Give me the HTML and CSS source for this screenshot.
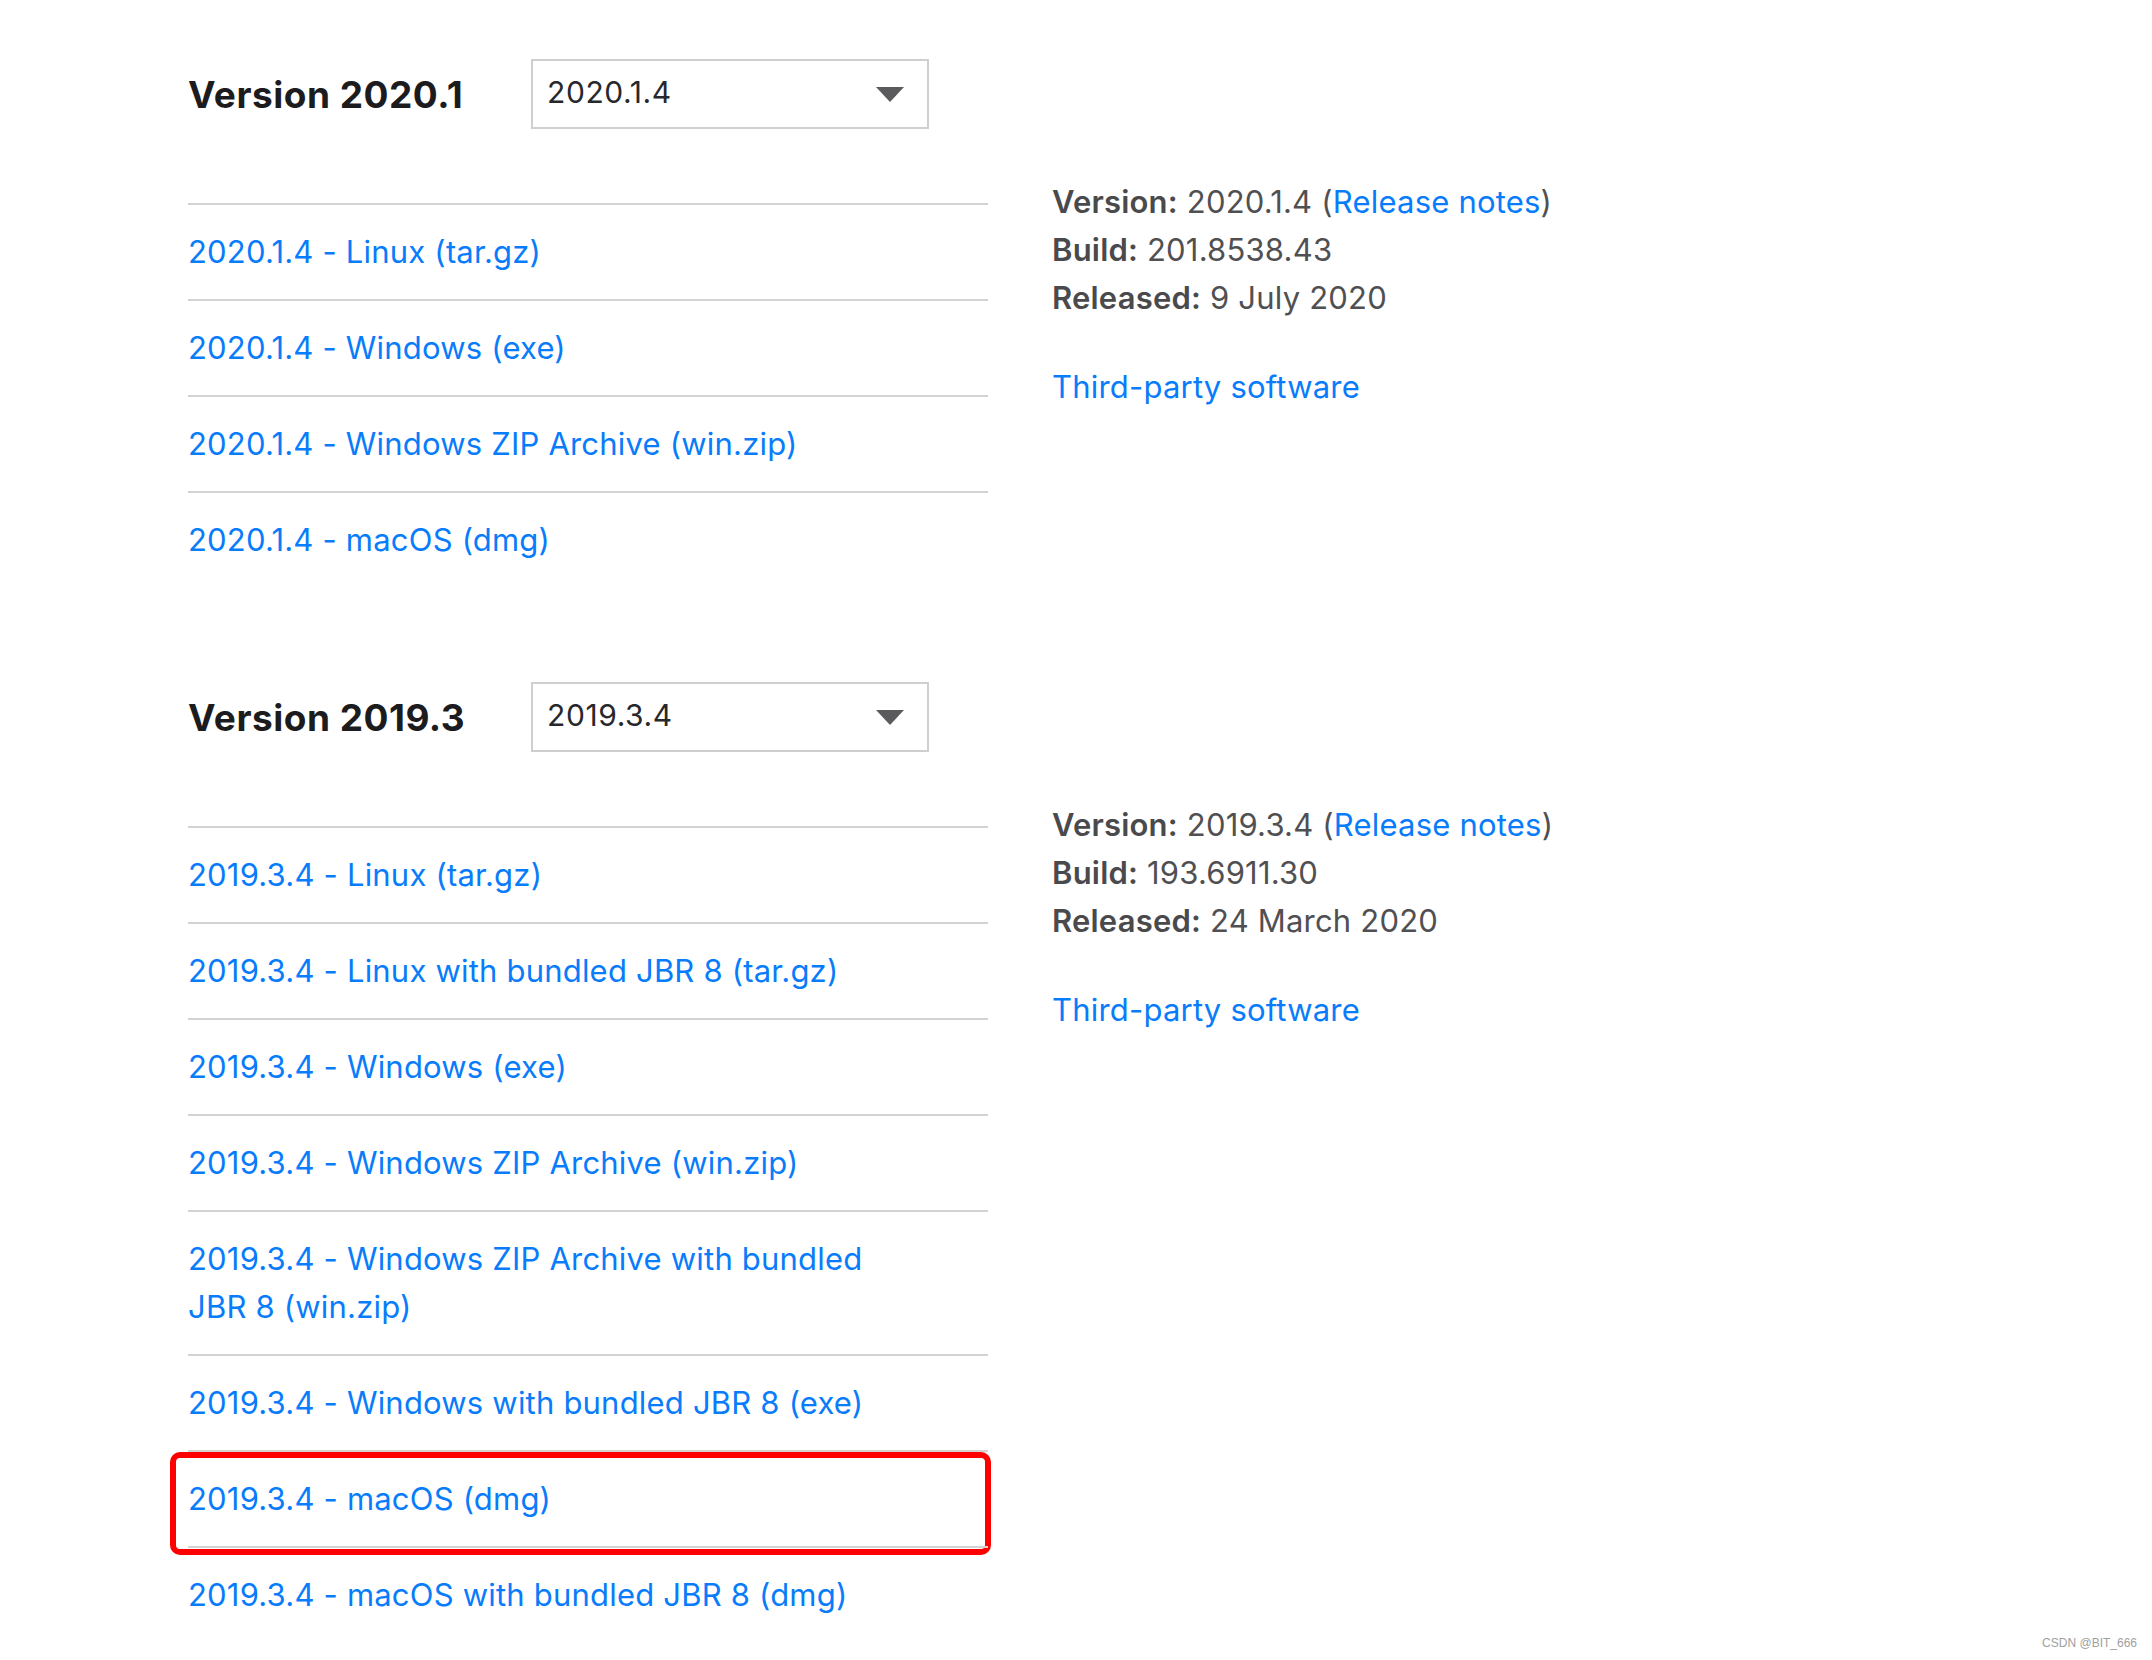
FILE: index.html
```html
<!DOCTYPE html>
<html lang="en">
<head>
<meta charset="utf-8">
<title>Other versions</title>
<link rel="stylesheet" href="styles.css">
</head>
<body>
<main class="page">
  <section class="release">
    <header class="release-head">
      <h2 class="release-title">Version 2020.1</h2>
      <div class="select">
        <span class="select-value">2020.1.4</span>
        <svg class="select-arrow" width="28" height="15" viewBox="0 0 28 15"><path d="M0 0H28L14 15Z" fill="#5b5b5d"/></svg>
      </div>
    </header>
    <div class="release-body">
      <ul class="downloads">
        <li class="download"><a href="#">2020.1.4 - Linux (tar.gz)</a></li>
        <li class="download"><a href="#">2020.1.4 - Windows (exe)</a></li>
        <li class="download"><a href="#">2020.1.4 - Windows ZIP Archive (win.zip)</a></li>
        <li class="download"><a href="#">2020.1.4 - macOS (dmg)</a></li>
      </ul>
      <div class="info">
        <p class="meta"><b>Version:</b> 2020.1.4 (<a href="#">Release notes</a>)<br><b>Build:</b> 201.8538.43<br><b>Released:</b> 9 July 2020</p>
        <p class="third"><a href="#">Third-party software</a></p>
      </div>
    </div>
  </section>

  <section class="release">
    <header class="release-head">
      <h2 class="release-title">Version 2019.3</h2>
      <div class="select">
        <span class="select-value">2019.3.4</span>
        <svg class="select-arrow" width="28" height="15" viewBox="0 0 28 15"><path d="M0 0H28L14 15Z" fill="#5b5b5d"/></svg>
      </div>
    </header>
    <div class="release-body">
      <ul class="downloads">
        <li class="download"><a href="#">2019.3.4 - Linux (tar.gz)</a></li>
        <li class="download"><a href="#">2019.3.4 - Linux with bundled JBR 8 (tar.gz)</a></li>
        <li class="download"><a href="#">2019.3.4 - Windows (exe)</a></li>
        <li class="download"><a href="#">2019.3.4 - Windows ZIP Archive (win.zip)</a></li>
        <li class="download"><a href="#">2019.3.4 - Windows ZIP Archive with bundled JBR 8 (win.zip)</a></li>
        <li class="download"><a href="#">2019.3.4 - Windows with bundled JBR 8 (exe)</a></li>
        <li class="download highlight"><a href="#">2019.3.4 - macOS (dmg)</a></li>
        <li class="download"><a href="#">2019.3.4 - macOS with bundled JBR 8 (dmg)</a></li>
      </ul>
      <div class="info">
        <p class="meta"><b>Version:</b> 2019.3.4 (<a href="#">Release notes</a>)<br><b>Build:</b> 193.6911.30<br><b>Released:</b> 24 March 2020</p>
        <p class="third"><a href="#">Third-party software</a></p>
      </div>
    </div>
  </section>
</main>
<div class="watermark">CSDN @BIT_666</div>
</body>
</html>
```

FILE: styles.css
```css
html, body {
  margin: 0;
  padding: 0;
  background: #ffffff;
}

body {
  font-family: Inter, "Noto Sans", "DejaVu Sans", sans-serif;
  color: #27282c;
  position: relative;
  min-height: 1660px;
}

a {
  color: #087cfa;
  text-decoration: none;
}

.page {
  padding: 59px 0 0 188px;
}

.release + .release {
  margin-top: 95px;
}

.release-head {
  display: flex;
  align-items: center;
  height: 70px;
}

.release-title {
  flex: 0 0 343px;
  margin: 0;
  font-size: 37px;
  font-weight: 700;
  color: #1c1c1e;
  letter-spacing: 0.5px;
}

.select {
  box-sizing: border-box;
  width: 398px;
  height: 70px;
  border: 2px solid #cfcfcf;
  display: flex;
  align-items: center;
  justify-content: space-between;
  padding: 0 23px 0 14px;
}

.select-value {
  font-size: 30px;
  letter-spacing: 0.6px;
  color: #27282c;
  position: relative;
  top: -2px;
}

.select-arrow {
  display: block;
}

.release-body {
  display: flex;
  align-items: flex-start;
  gap: 64px;
}

.downloads {
  list-style: none;
  margin: 74px 0 0 0;
  padding: 0;
  width: 800px;
  flex: 0 0 800px;
}

.download {
  border-top: 2px solid #d3d3d4;
  padding: 23px 96px 23px 0;
  font-size: 31px;
  letter-spacing: 0.2px;
  line-height: 48px;
  position: relative;
}

.highlight::after {
  content: "";
  position: absolute;
  left: -18px;
  right: -3px;
  top: 0;
  bottom: -9px;
  border: 6px solid #ff0000;
  border-radius: 10px;
  pointer-events: none;
}

.info {
  margin-top: 49px;
  font-size: 31px;
  letter-spacing: 0.2px;
  line-height: 48px;
  color: #505052;
}

.info p {
  margin: 0;
}

.info b {
  font-weight: 600;
  color: #4a4a4c;
}

.info .third {
  margin-top: 41px;
}

.watermark {
  position: absolute;
  right: 15px;
  top: 1636px;
  font-family: "Liberation Sans", Arial, sans-serif;
  font-size: 12px;
  color: #a0a0a0;
}
```
